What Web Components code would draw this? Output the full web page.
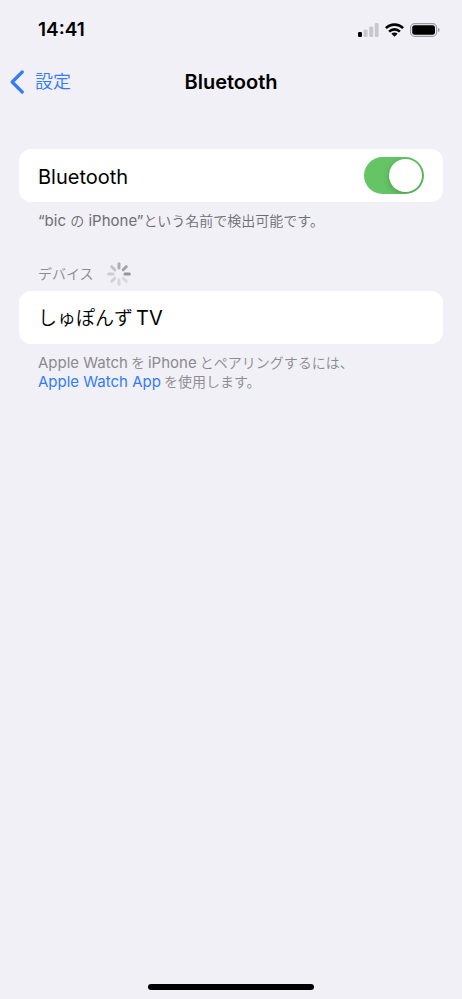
<!DOCTYPE html>
<html lang="ja">
<head>
<meta charset="utf-8">
<meta name="viewport" content="width=device-width, initial-scale=1">
<title>Bluetooth</title>
<style>
html, body { margin: 0; height: 100%; }
body {
  background: #f1f0f6; color: #000;
  font-family: Inter, "Noto Sans CJK JP", sans-serif; font-size: 20px;
  --blue: #347bf6; --gray: #8a8a8f;
}
</style>
</head>
<body>
<settings-screen>
  <status-bar slot="status" time="14:41"></status-bar>
  <nav-bar slot="nav" back="設定">Bluetooth</nav-bar>
  <settings-group>
    <settings-row><toggle-switch>Bluetooth</toggle-switch></settings-row>
    <group-note slot="footer" class="strong">“bic <ja-text>の</ja-text> iPhone”<ja-text>という名前で検出可能です。</ja-text></group-note>
  </settings-group>
  <settings-group>
    <group-title slot="header">デバイス</group-title>
    <settings-row><row-button><ja-text class="after">しゅぽんず</ja-text>TV</row-button></settings-row>
    <group-note slot="footer">Apple Watch<ja-text class="before after">を</ja-text>iPhone<ja-text class="before">とペアリングするには、</ja-text><br><text-link href="#watch">Apple Watch App</text-link><ja-text class="before">を使用します。</ja-text></group-note>
  </settings-group>
</settings-screen>
<script>
const define = (name, html) => customElements.define(name, class extends HTMLElement {
  constructor() {
    super();
    const t = document.createElement('template');
    t.innerHTML = (typeof html === 'function' ? html(this) : html).trim().replace('</style>\n', '</style>');
    this.attachShadow({ mode: 'open' }).append(t.content.cloneNode(true));
  }
});

define('settings-screen', `
<style>
:host { display: flex; flex-direction: column; min-height: 100vh; }
main { flex: 1; padding: 45px 19px 0; display: flex; flex-direction: column; gap: 32px; }
footer { display: flex; justify-content: center; padding-bottom: 9px; }
.home { width: 36%; height: 6px; border-radius: 3px; background: #000; }
</style>
<slot name="status"></slot><slot name="nav"></slot>
<main><slot></slot></main>
<footer><div class="home"></div></footer>`);

define('status-bar', el => `
<style>
:host { display: flex; align-items: center; justify-content: space-between; height: 59px; padding: 0 22px 0 38px; box-sizing: border-box; }
time { font-size: 19px; font-weight: 600; line-height: 24px; }
.icons { display: flex; align-items: center; gap: 6px; }
svg { display: block; }
</style>
<time>${el.getAttribute('time')}</time>
<div class="icons">
<svg width="21" height="14" viewBox="0 0 21 14" role="img" aria-label="signal">
  <rect x="0" y="9" width="4" height="5" rx="1.2"/>
  <g fill="#c8c8cc"><rect x="5.6" y="6.5" width="4" height="7.5" rx="1.2"/><rect x="11.2" y="3.5" width="4" height="10.5" rx="1.2"/><rect x="16.8" y="0" width="3.8" height="14" rx="1.2"/></g>
</svg>
<svg width="19" height="14" viewBox="0 0 19 14" role="img" aria-label="Wi-Fi">
  <g fill="none" stroke="#000" stroke-width="2.6"><path d="M.9 5.2a12.2 12.2 0 0 1 17.2 0"/><path d="M4.1 8.6a7.7 7.7 0 0 1 10.8 0"/></g>
  <path d="M9.5 13.8 6.4 10.7a4.4 4.4 0 0 1 6.2 0z"/>
</svg>
<svg width="30" height="14" viewBox="0 0 30 14" role="img" aria-label="battery">
  <rect x=".6" y=".6" width="26" height="12.8" rx="4" fill="none" stroke="#9b9b9f" stroke-width="1.1"/>
  <rect x="2.2" y="2.2" width="22.8" height="9.6" rx="2.4"/>
  <path d="M28 4.8c2 .7 2 3.7 0 4.4z" fill="#9b9b9f"/>
</svg>
</div>`);

define('nav-bar', el => `
<style>
:host { display: grid; grid-template-columns: 1fr auto 1fr; align-items: center; height: 45px; padding: 0 10px; }
button { justify-self: start; display: flex; align-items: center; gap: 11px; border: 0; padding: 0; background: none; color: var(--blue); font: inherit; font-size: 18px; font-weight: 350; line-height: 24px; }
svg { display: block; }
h1 { margin: 0; font-size: 20px; font-weight: 600; line-height: 24px; }
</style>
<button type="button"><svg width="14" height="24" viewBox="0 0 14 24" fill="none" stroke="currentColor" stroke-width="3.2" stroke-linecap="round" stroke-linejoin="round" aria-hidden="true"><path d="M12.2 2 2.2 12l10 10"/></svg><span>${el.getAttribute('back')}</span></button>
<h1><slot></slot></h1>`);

define('settings-group', `
<style>
:host { display: block; }
.card { background: #fff; border-radius: 12px; overflow: hidden; }
</style>
<slot name="header"></slot><div class="card"><slot></slot></div><slot name="footer"></slot>`);

define('settings-row', `
<style>:host { display: flex; align-items: center; min-height: 53px; padding: 0 19px; }</style><slot></slot>`);

define('toggle-switch', `
<style>
:host { display: block; flex: 1; }
label { display: flex; align-items: center; justify-content: space-between; line-height: 28px; }
span { padding-top: 2px; }
input { appearance: none; margin: 0; width: 60px; height: 37px; box-sizing: border-box; border-radius: 19px; background: #ddd; padding: 2px; display: flex; }
input::before { content: ""; width: 33px; height: 33px; border-radius: 50%; background: #fff; box-shadow: 0 2px 6px #0003; }
input:checked { background: #65c466; justify-content: flex-end; overflow: hidden; }
</style>
<label><span><slot></slot></span><input type="checkbox" role="switch" checked></label>`);

define('row-button', `
<style>
:host { display: block; flex: 1; }
button { width: 100%; border: 0; padding: 0; background: none; color: inherit; font: inherit; line-height: 26px; text-align: left; --ja-size: 19px; }
</style><button type="button"><slot></slot></button>`);

define('ja-text', `
<style>
:host { font-size: var(--ja-size, 14px); font-weight: 350; line-height: 1; }
:host(.before) { margin-left: 3px; }
:host(.after) { margin-right: 3px; }
</style><slot></slot>`);

define('group-title', `
<style>
:host { display: flex; align-items: center; gap: 13px; height: 24px; padding: 0 19px 5px; font-size: 14px; font-weight: 350; color: var(--gray); }
h2 { margin: 0; font: inherit; line-height: 24px; }
svg { display: block; }
</style>
<h2><slot></slot></h2>
<svg width="24" height="24" viewBox="-12 -12 24 24" stroke-width="3" stroke-linecap="round" role="img" aria-label="検索中">
  <path d="M0-10.3V-6" stroke="#aeadb2"/><path d="M7.3-7.3 4.2-4.2" stroke="#a3a2a7"/>
  <path d="M10.3 0H6" stroke="#949398"/><path d="M7.3 7.3 4.2 4.2" stroke="#d9d8dd"/>
  <path d="M0 10.3V6" stroke="#d6d5da"/><path d="M-7.3 7.3-4.2 4.2" stroke="#d2d1d6"/>
  <path d="M-10.3 0H-6" stroke="#cdccd1"/><path d="M-7.3-7.3-4.2-4.2" stroke="#c3c2c7"/>
</svg>`);

define('group-note', `
<style>
:host { display: block; padding: 9px 19px 0; font-size: 15px; line-height: 19px; color: var(--gray); }
:host(.strong) { color: #6d6d72; }
</style><slot></slot>`);

define('text-link', el => `
<style>a { color: var(--blue); text-decoration: none; }</style><a href="${el.getAttribute('href')}"><slot></slot></a>`);
</script>
</body>
</html>
